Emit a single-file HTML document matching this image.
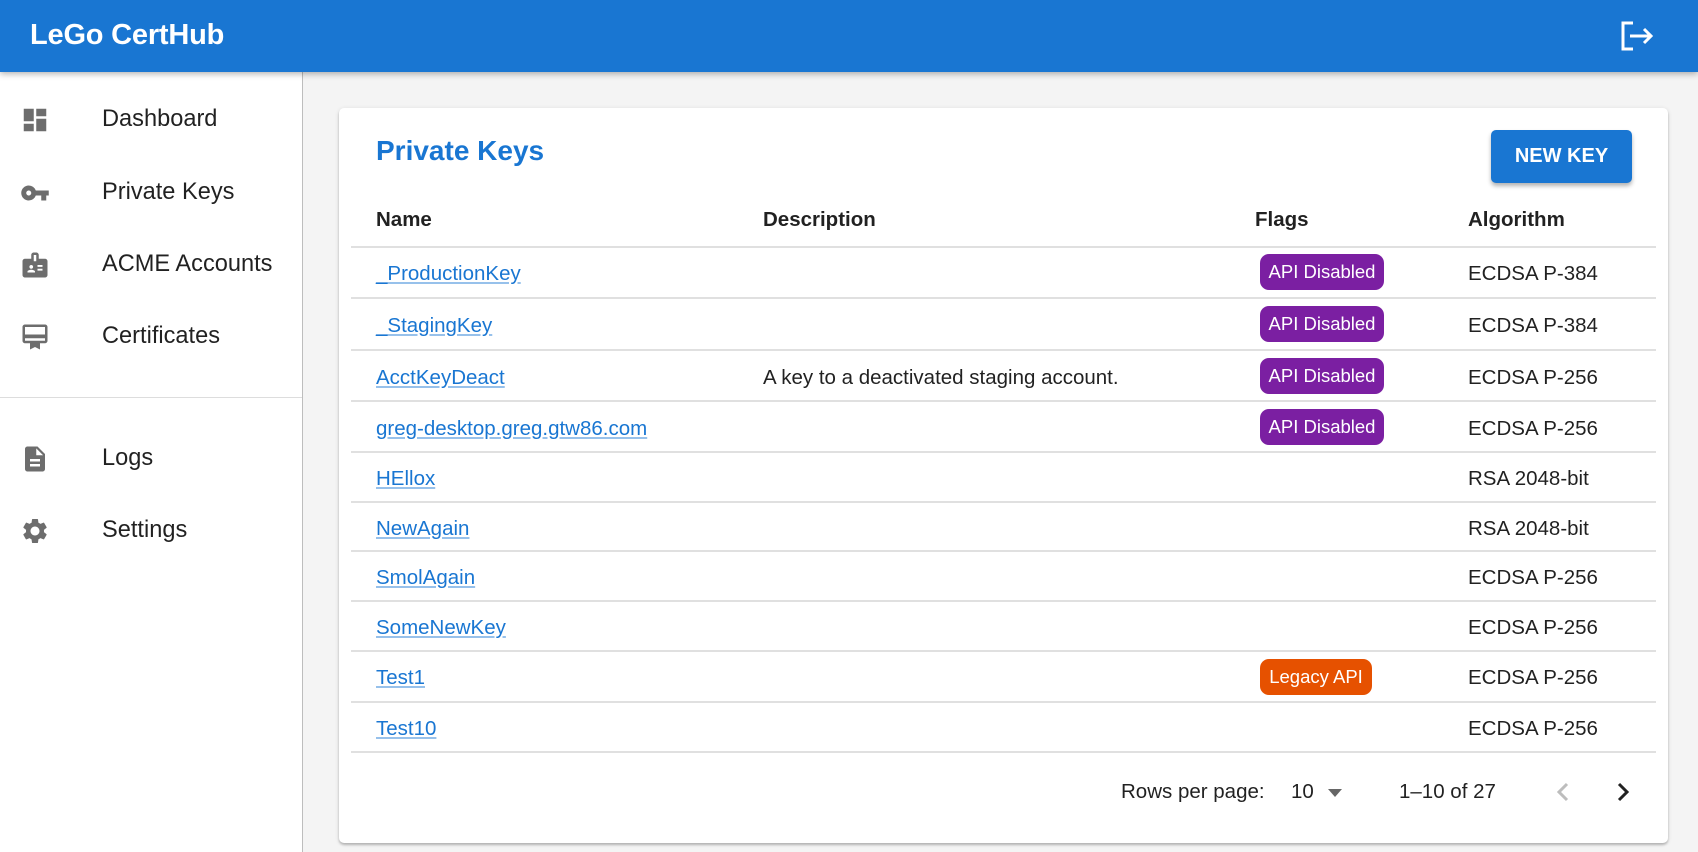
<!DOCTYPE html>
<html><head><meta charset="utf-8"><style>
*{box-sizing:border-box;margin:0;padding:0}
body{width:1698px;height:852px;overflow:hidden;background:#f4f4f4;font-family:"Liberation Sans",sans-serif;color:rgba(0,0,0,.87);position:relative}
.hdr{position:absolute;left:0;top:0;width:1698px;height:72px;background:#1976d2;box-shadow:0 2px 6px rgba(0,0,0,.3);z-index:2}
.hdr h1{position:absolute;left:30px;top:19px;font-size:29px;font-weight:bold;color:#fff;letter-spacing:-0.2px}
.side{position:absolute;left:0;top:72px;width:303px;height:780px;background:#fff;border-right:1px solid #bdbdbd}
.item{position:absolute;left:0;width:302px;height:40px}
.item svg{position:absolute;left:20px;top:6px}
.item span{position:absolute;left:102px;top:7px;font-size:23.6px}
.div{position:absolute;left:0;top:325px;width:302px;height:1px;background:#ddd}
.card{position:absolute;left:339px;top:108px;width:1329px;height:735px;background:#fff;border-radius:5px;box-shadow:0 2px 2px rgba(0,0,0,.2),0 1px 5px rgba(0,0,0,.12)}
.ttl{position:absolute;left:37px;top:27px;font-size:28px;font-weight:bold;color:#1976d2}
.btn{position:absolute;left:1152px;top:22px;width:141px;height:53px;background:#1976d2;color:#fff;border-radius:5px;font-size:20px;font-weight:bold;text-align:center;line-height:53px;box-shadow:0 3px 4px rgba(0,0,0,.3)}
.r{position:absolute;left:12px;width:1305px;border-bottom:2px solid #e0e0e0}
.c{position:absolute;font-size:20.5px;white-space:nowrap}
.h{font-weight:bold}
a{color:#1976d2;text-decoration:underline;text-decoration-color:rgba(25,118,210,.45)}
.chip{position:absolute;height:36px;border-radius:9px;color:#fff;font-size:18.5px;line-height:36px;text-align:center}
.pg{position:absolute;top:672px;font-size:20.5px}
</style></head><body>
<div class="hdr"><h1>LeGo CertHub</h1>
<svg style="position:absolute;left:1620px;top:21px" width="34" height="30" viewBox="0 0 34 30" fill="none" stroke="#fff" stroke-width="3"><path d="M13 2H3v26h10"/><path d="M10 15h21M24 8l7 7-7 7"/></svg></div>
<div class="side">
<div class="item" style="top:27px"><svg width="30" height="30" viewBox="0 0 24 24" fill="#6d6d6d"><path d="M3 13h8V3H3zm0 8h8v-6H3zm10 0h8V11h-8zm0-18v6h8V3z"/></svg><span>Dashboard</span></div>
<div class="item" style="top:100px"><svg width="30" height="30" viewBox="0 0 24 24" fill="#6d6d6d"><path d="M12.65 10A5.99 5.99 0 0 0 7 6c-3.31 0-6 2.69-6 6s2.69 6 6 6a5.99 5.99 0 0 0 5.65-4H17v4h4v-4h2v-4H12.65zM7 14c-1.1 0-2-.9-2-2s.9-2 2-2 2 .9 2 2-.9 2-2 2z"/></svg><span>Private Keys</span></div>
<div class="item" style="top:172px"><svg width="30" height="30" viewBox="0 0 24 24" fill="#6d6d6d"><path d="M20 7h-5V4c0-1.1-.9-2-2-2h-2c-1.1 0-2 .9-2 2v3H4c-1.1 0-2 .9-2 2v11c0 1.1.9 2 2 2h16c1.1 0 2-.9 2-2V9c0-1.1-.9-2-2-2zM9 12c.83 0 1.5.67 1.5 1.5S9.830 15 9 15s-1.5-.67-1.5-1.5S8.17 12 9 12zm3 6H6v-.75c0-1 2-1.5 3-1.5s3 .5 3 1.5V18zm1-9h-2V4h2v5zm5 7.5h-4V15h4v1.5zm0-3h-4V12h4v1.5z"/></svg><span>ACME Accounts</span></div>
<div class="item" style="top:244px"><svg width="30" height="30" viewBox="0 0 24 24" fill="#6d6d6d"><path d="M20 2H4c-1.1 0-2 .9-2 2v11c0 1.1.9 2 2 2h4v5l4-2 4 2v-5h4c1.1 0 2-.9 2-2V4c0-1.1-.9-2-2-2zm0 13H4v-2h16v2zm0-5H4V4h16v6z"/></svg><span>Certificates</span></div>
<div class="div"></div>
<div class="item" style="top:366px"><svg width="30" height="30" viewBox="0 0 24 24" fill="#6d6d6d"><path d="M14 2H6c-1.1 0-2 .9-2 2v16c0 1.1.9 2 2 2h12c1.1 0 2-.9 2-2V8l-6-6zm2 16H8v-2h8v2zm0-4H8v-2h8v2zm-3-5V3.5L18.5 9H13z"/></svg><span>Logs</span></div>
<div class="item" style="top:438px"><svg width="30" height="30" viewBox="0 0 24 24" fill="#6d6d6d"><path d="M19.14 12.94c.04-.3.06-.61.06-.94 0-.32-.02-.64-.07-.94l2.030-1.58a.49.49 0 0 0 .12-.61l-1.92-3.32a.488.488 0 0 0-.59-.22l-2.39.96c-.5-.38-1.03-.7-1.62-.94l-.36-2.54a.484.484 0 0 0-.48-.41h-3.84c-.24 0-.43.17-.47.41l-.36 2.54c-.59.24-1.13.57-1.62.94l-2.39-.96a.48.48 0 0 0-.59.22L2.74 8.87c-.12.21-.08.47.12.61l2.03 1.58c-.05.3-.09.63-.09.94s.02.64.07.94l-2.03 1.58a.49.49 0 0 0-.12.61l1.92 3.32c.12.22.37.29.59.22l2.39-.96c.5.38 1.03.7 1.62.94l.36 2.54c.05.24.24.41.48.41h3.84c.24 0 .44-.17.47-.41l.36-2.54c.59-.24 1.13-.56 1.62-.94l2.39.96c.22.08.47 0 .59-.22l1.92-3.32c.12-.22.07-.47-.12-.61l-2.01-1.58zM12 15.6c-1.98 0-3.6-1.62-3.6-3.6s1.62-3.6 3.6-3.6 3.6 1.62 3.6 3.6-1.62 3.6-3.6 3.6z"/></svg><span>Settings</span></div>
</div>
<div class="card">
<div class="ttl">Private Keys</div>
<div class="btn">NEW KEY</div>
<div class="c h" style="left:37px;top:100px">Name</div>
<div class="c h" style="left:424px;top:100px">Description</div>
<div class="c h" style="left:916px;top:100px">Flags</div>
<div class="c h" style="left:1129px;top:100px">Algorithm</div>
<div class="r" style="top:138px"></div>
<div class="r" style="top:189px"></div>
<div class="r" style="top:241px"></div>
<div class="r" style="top:292px"></div>
<div class="r" style="top:343px"></div>
<div class="r" style="top:393px"></div>
<div class="r" style="top:442px"></div>
<div class="r" style="top:492px"></div>
<div class="r" style="top:542px"></div>
<div class="r" style="top:593px"></div>
<div class="r" style="top:643px"></div>

<div class="c" style="left:37px;top:154px"><a>_ProductionKey</a></div>
<div class="chip" style="left:921px;top:146px;width:124px;background:#7b1fa2">API Disabled</div>
<div class="c" style="left:1129px;top:154px">ECDSA P-384</div>

<div class="c" style="left:37px;top:206px"><a>_StagingKey</a></div>
<div class="chip" style="left:921px;top:198px;width:124px;background:#7b1fa2">API Disabled</div>
<div class="c" style="left:1129px;top:206px">ECDSA P-384</div>

<div class="c" style="left:37px;top:258px"><a>AcctKeyDeact</a></div>
<div class="c" style="left:424px;top:258px">A key to a deactivated staging account.</div>
<div class="chip" style="left:921px;top:250px;width:124px;background:#7b1fa2">API Disabled</div>
<div class="c" style="left:1129px;top:258px">ECDSA P-256</div>

<div class="c" style="left:37px;top:309px"><a>greg-desktop.greg.gtw86.com</a></div>
<div class="chip" style="left:921px;top:301px;width:124px;background:#7b1fa2">API Disabled</div>
<div class="c" style="left:1129px;top:309px">ECDSA P-256</div>

<div class="c" style="left:37px;top:359px"><a>HEllox</a></div>
<div class="c" style="left:1129px;top:359px">RSA 2048-bit</div>
<div class="c" style="left:37px;top:409px"><a>NewAgain</a></div>
<div class="c" style="left:1129px;top:409px">RSA 2048-bit</div>
<div class="c" style="left:37px;top:458px"><a>SmolAgain</a></div>
<div class="c" style="left:1129px;top:458px">ECDSA P-256</div>
<div class="c" style="left:37px;top:508px"><a>SomeNewKey</a></div>
<div class="c" style="left:1129px;top:508px">ECDSA P-256</div>

<div class="c" style="left:37px;top:558px"><a>Test1</a></div>
<div class="chip" style="left:921px;top:551px;width:112px;background:#e65100">Legacy API</div>
<div class="c" style="left:1129px;top:558px">ECDSA P-256</div>

<div class="c" style="left:37px;top:609px"><a>Test10</a></div>
<div class="c" style="left:1129px;top:609px">ECDSA P-256</div>

<div class="pg" style="left:782px">Rows per page:</div>
<div class="pg" style="left:952px">10</div>
<svg style="position:absolute;left:988px;top:680px" width="16" height="10" viewBox="0 0 16 10"><path d="M1 1h14L8 9z" fill="#666"/></svg>
<div class="pg" style="left:1060px">1–10 of 27</div>
<svg style="position:absolute;left:1216px;top:672px" width="16" height="24" viewBox="0 0 16 24" fill="none" stroke="#bdbdbd" stroke-width="3"><path d="M12 4l-8 8 8 8"/></svg>
<svg style="position:absolute;left:1276px;top:672px" width="16" height="24" viewBox="0 0 16 24" fill="none" stroke="#222" stroke-width="3"><path d="M4 4l8 8-8 8"/></svg>
</div>
</body></html>
